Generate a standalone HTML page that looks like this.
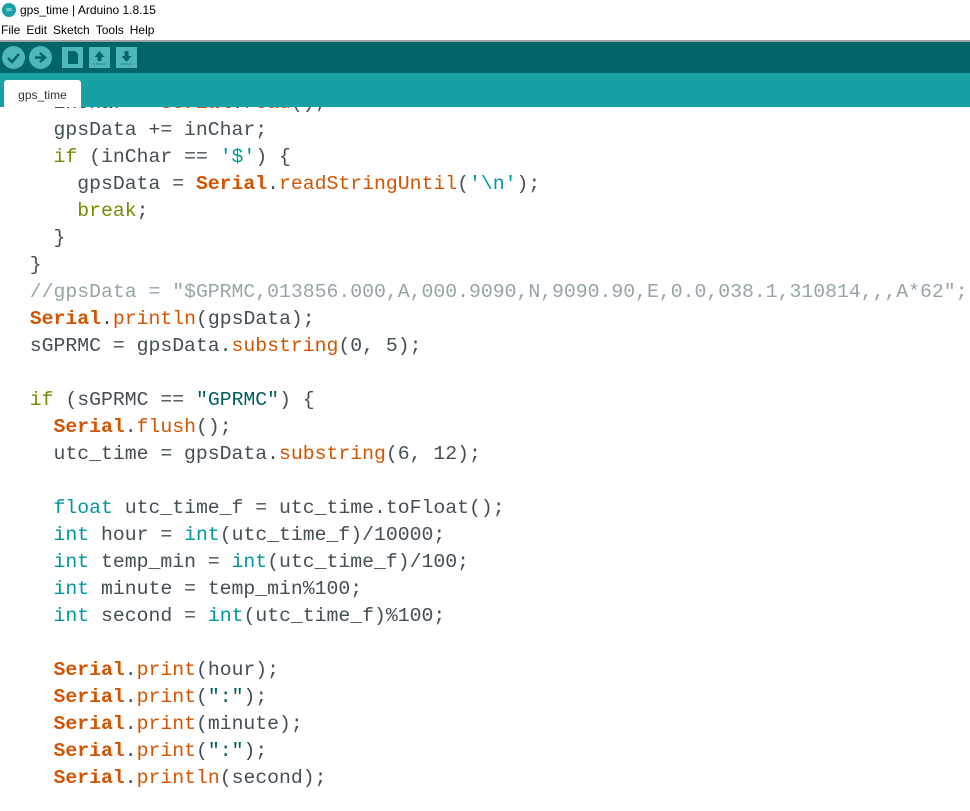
<!DOCTYPE html>
<html><head><style>
body{margin:0;width:970px;height:811px;overflow:hidden;background:#fff;font-family:"Liberation Sans",sans-serif;position:relative}
.title{position:absolute;left:0;top:0;height:20px;width:970px;font-size:12px;line-height:20px;color:#000}
.title .ic{position:absolute;left:2px;top:3px;width:14px;height:14px;border-radius:50%;background:#17a1a5;color:#fff;font-size:8px;line-height:14px;text-align:center}
.title .tt{position:absolute;left:20px}
.menu{position:absolute;top:20px;left:0;height:20px;font-size:12px;line-height:21px;width:970px}
.menu span{margin-left:1px;margin-right:5px}
.sep{position:absolute;top:40px;left:0;width:970px;height:2px;background:#a0a0a0}
.tb{position:absolute;top:42px;left:0;width:970px;height:31px;background:#006468}
.circ{position:absolute;top:4px;width:23px;height:23px;border-radius:50%;background:#4db7bb}
.sq{position:absolute;top:5px;width:21px;height:21px;background:#4db7bb}
.tabbar{position:absolute;top:73px;left:0;width:970px;height:34px;background:#17a1a5}
.tab{position:absolute;left:4px;top:7px;width:77px;height:27px;background:#fff;border-radius:3px 3px 0 0;font-size:12px;color:#333;text-align:center;line-height:30px}
.ed{position:absolute;top:107px;left:0;width:970px;height:704px;overflow:hidden}
pre{margin:0;position:absolute;top:-17.5px;left:6px;font-family:"Liberation Mono",monospace;font-size:19.8px;line-height:27px;color:#434f54;white-space:pre}
.k{color:#728e00}.t{color:#00979c}.S{color:#d35400;font-weight:bold}.f{color:#d35400}.c{color:#95a5a6}.s{color:#005c5f}.ch{color:#00979c}
</style></head><body>
<div class="title"><div class="ic">∞</div><span class="tt">gps_time | Arduino 1.8.15</span></div>
<div class="menu"><span>File</span><span>Edit</span><span>Sketch</span><span>Tools</span><span>Help</span></div>
<div class="sep"></div>
<div class="tb">
<div class="circ" style="left:2px"><svg width="23" height="23"><path d="M6 12l4 4 7-8" stroke="#006468" stroke-width="2.5" fill="none"/></svg></div>
<div class="circ" style="left:29px"><svg width="23" height="23"><path d="M6 11.5h8M11 7l5 4.5-5 4.5" stroke="#006468" stroke-width="2.5" fill="none"/></svg></div>
<div class="sq" style="left:62px"><svg width="21" height="21"><path d="M6 4h7l3 3v10H6z" fill="#006468"/></svg></div>
<div class="sq" style="left:89px"><svg width="21" height="21"><path d="M10.5 4l5 6h-3v4h-4v-4h-3z" fill="#006468"/><path d="M5 17h11" stroke="#006468" stroke-dasharray="1 1"/></svg></div>
<div class="sq" style="left:116px"><svg width="21" height="21"><path d="M10.5 15l5-6h-3V4h-4v5h-3z" fill="#006468"/><path d="M5 17h11" stroke="#006468" stroke-dasharray="1 1"/></svg></div>
</div>
<div class="ed"><pre>    inChar = <span class="S">Serial</span>.<span class="f">read</span>();
    gpsData += inChar;
    <span class="k">if</span> (inChar == <span class="ch">'$'</span>) {
      gpsData = <span class="S">Serial</span>.<span class="f">readStringUntil</span>(<span class="ch">'\n'</span>);
      <span class="k">break</span>;
    }
  }
  <span class="c">//gpsData = "$GPRMC,013856.000,A,000.9090,N,9090.90,E,0.0,038.1,310814,,,A*62";</span>
  <span class="S">Serial</span>.<span class="f">println</span>(gpsData);
  sGPRMC = gpsData.<span class="f">substring</span>(0, 5);

  <span class="k">if</span> (sGPRMC == <span class="s">"GPRMC"</span>) {
    <span class="S">Serial</span>.<span class="f">flush</span>();
    utc_time = gpsData.<span class="f">substring</span>(6, 12);

    <span class="t">float</span> utc_time_f = utc_time.toFloat();
    <span class="t">int</span> hour = <span class="t">int</span>(utc_time_f)/10000;
    <span class="t">int</span> temp_min = <span class="t">int</span>(utc_time_f)/100;
    <span class="t">int</span> minute = temp_min%100;
    <span class="t">int</span> second = <span class="t">int</span>(utc_time_f)%100;

    <span class="S">Serial</span>.<span class="f">print</span>(hour);
    <span class="S">Serial</span>.<span class="f">print</span>(<span class="s">":"</span>);
    <span class="S">Serial</span>.<span class="f">print</span>(minute);
    <span class="S">Serial</span>.<span class="f">print</span>(<span class="s">":"</span>);
    <span class="S">Serial</span>.<span class="f">println</span>(second);
</pre></div>
<div class="tabbar"><div class="tab">gps_time</div></div>
</body></html>
